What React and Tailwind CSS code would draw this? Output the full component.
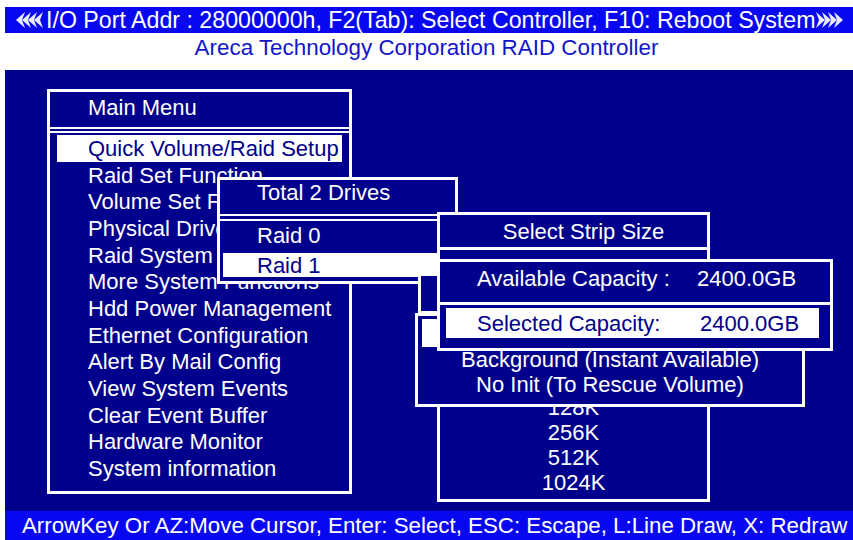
import React from "react";

const mainItems = [
  "Quick Volume/Raid Setup",
  "Raid Set Function",
  "Volume Set Function",
  "Physical Drives",
  "Raid System Function",
  "More System Functions",
  "Hdd Power Management",
  "Ethernet Configuration",
  "Alert By Mail Config",
  "View System Events",
  "Clear Event Buffer",
  "Hardware Monitor",
  "System information",
];

// the smaller sizes sit under the capacity / init windows
const stripSizes = ["128K", "256K", "512K", "1024K"];

const Arrows = ({ dir }) => (
  <svg width="30" height="18" viewBox="0 0 30 18" className="shrink-0">
    {[0, 1, 2, 3].map((i) =>
      dir === "left" ? (
        <polygon key={i} points={`${i * 6 + 10},1 ${i * 6 + 1},9 ${i * 6 + 10},17 ${i * 6 + 7},9`} fill="#e8ecff" />
      ) : (
        <polygon key={i} points={`${i * 6 + 1},1 ${i * 6 + 10},9 ${i * 6 + 1},17 ${i * 6 + 4},9`} fill="#e8ecff" />
      )
    )}
  </svg>
);

export default function App() {
  return (
    <div
      className="w-[853px] h-[540px] bg-white overflow-hidden flex flex-col text-[22px] leading-[25px] text-white"
      style={{ fontFamily: '"Liberation Sans", Arial, sans-serif' }}
    >
      {/* top status bar */}
      <div className="mt-[7px] ml-[5px] h-[26px] bg-[#0808f0] flex items-center pl-[10px] text-[23.2px]">
        <Arrows dir="left" />
        <span className="whitespace-nowrap pl-[1px]">
          I/O Port Addr : 28000000h, F2(Tab): Select Controller, F10: Reboot System
        </span>
        <Arrows dir="right" />
      </div>

      <div className="h-[37px] flex justify-center pt-[2px] text-[#1414c8] text-[22.4px] whitespace-nowrap">
        Areca Technology Corporation RAID Controller
      </div>

      {/* screen area */}
      <div className="ml-[5px] h-[441px] bg-[#00008c] relative">
        {/* Main Menu */}
        <div className="absolute left-[42px] top-[19px] w-[305px] h-[405px] border-[3px] border-white flex flex-col">
          <div className="h-[35px] flex items-center pl-[38px] pb-[4px]">Main Menu</div>
          <div className="h-[6px] border-y-2 border-white"></div>
          <div className="pt-[2px] px-[7px] flex flex-col">
            {mainItems.map((t, i) => (
              <div
                key={t}
                className={`h-[26.7px] flex items-center pl-[31px] whitespace-nowrap ${
                  i === 0 ? "bg-white text-[#00008c]" : ""
                }`}
              >
                {t}
              </div>
            ))}
          </div>
        </div>

        {/* Total 2 Drives */}
        <div className="absolute left-[212px] top-[107px] w-[241px] h-[107px] bg-[#00008c] border-[3px] border-white flex flex-col">
          <div className="h-[34px] flex items-center pl-[37px] pb-[10px]">Total 2 Drives</div>
          <div className="h-[7px] border-y-2 border-white"></div>
          <div className="px-[3px] flex flex-col">
            <div className="h-[28px] flex items-center pl-[34px]">Raid 0</div>
            <div className="mt-[4px] h-[24px] flex items-center pl-[34px] bg-white text-[#00008c]">Raid 1</div>
          </div>
        </div>

        {/* window behind, only its corner shows */}
        <div className="absolute left-[413px] top-[203px] w-[290px] h-[41px] bg-[#00008c] border-[3px] border-white"></div>

        {/* Select Strip Size */}
        <div className="absolute left-[432px] top-[142px] w-[273px] h-[290px] bg-[#00008c] border-[3px] border-white flex flex-col">
          <div className="h-[32px] flex items-center justify-center pl-[20px]">Select Strip Size</div>
          <div className="h-[3px] bg-white"></div>
          <div className="flex-1 flex flex-col justify-end items-center pb-[4px]">
            {stripSizes.map((s) => (
              <div key={s} className="h-[25px] flex items-center">
                {s}
              </div>
            ))}
          </div>
        </div>

        {/* Initialization mode */}
        <div className="absolute left-[410px] top-[243px] w-[390px] h-[94px] bg-[#00008c] border-[3px] border-white flex flex-col pt-[3px]">
          <div className="mx-[4px] h-[28px] bg-white"></div>
          <div className="h-[25px] flex items-center justify-center whitespace-nowrap">
            Background (Instant Available)
          </div>
          <div className="h-[25px] flex items-center justify-center whitespace-nowrap">
            No Init (To Rescue Volume)
          </div>
        </div>

        {/* Capacity */}
        <div className="absolute left-[432px] top-[189px] w-[396px] h-[92px] bg-[#00008c] border-[3px] border-white flex flex-col">
          <div className="h-[40px] flex items-center pl-[37px] pb-[8px] whitespace-nowrap">
            <span className="w-[220px]">Available Capacity :</span>
            <span>2400.0GB</span>
          </div>
          <div className="h-[3px] bg-white"></div>
          <div className="mt-[3px] ml-[6px] mr-[11px] h-[30px] flex items-center pl-[31px] bg-white text-[#00008c] whitespace-nowrap">
            <span className="w-[223px]">Selected Capacity:</span>
            <span>2400.0GB</span>
          </div>
        </div>
      </div>

      {/* bottom key help bar */}
      <div className="ml-[5px] flex-1 bg-[#0808f0] flex items-center pl-[17px] text-[22.3px] whitespace-nowrap">
        ArrowKey Or AZ:Move Cursor, Enter: Select, ESC: Escape, L:Line Draw, X: Redraw
      </div>
    </div>
  );
}
